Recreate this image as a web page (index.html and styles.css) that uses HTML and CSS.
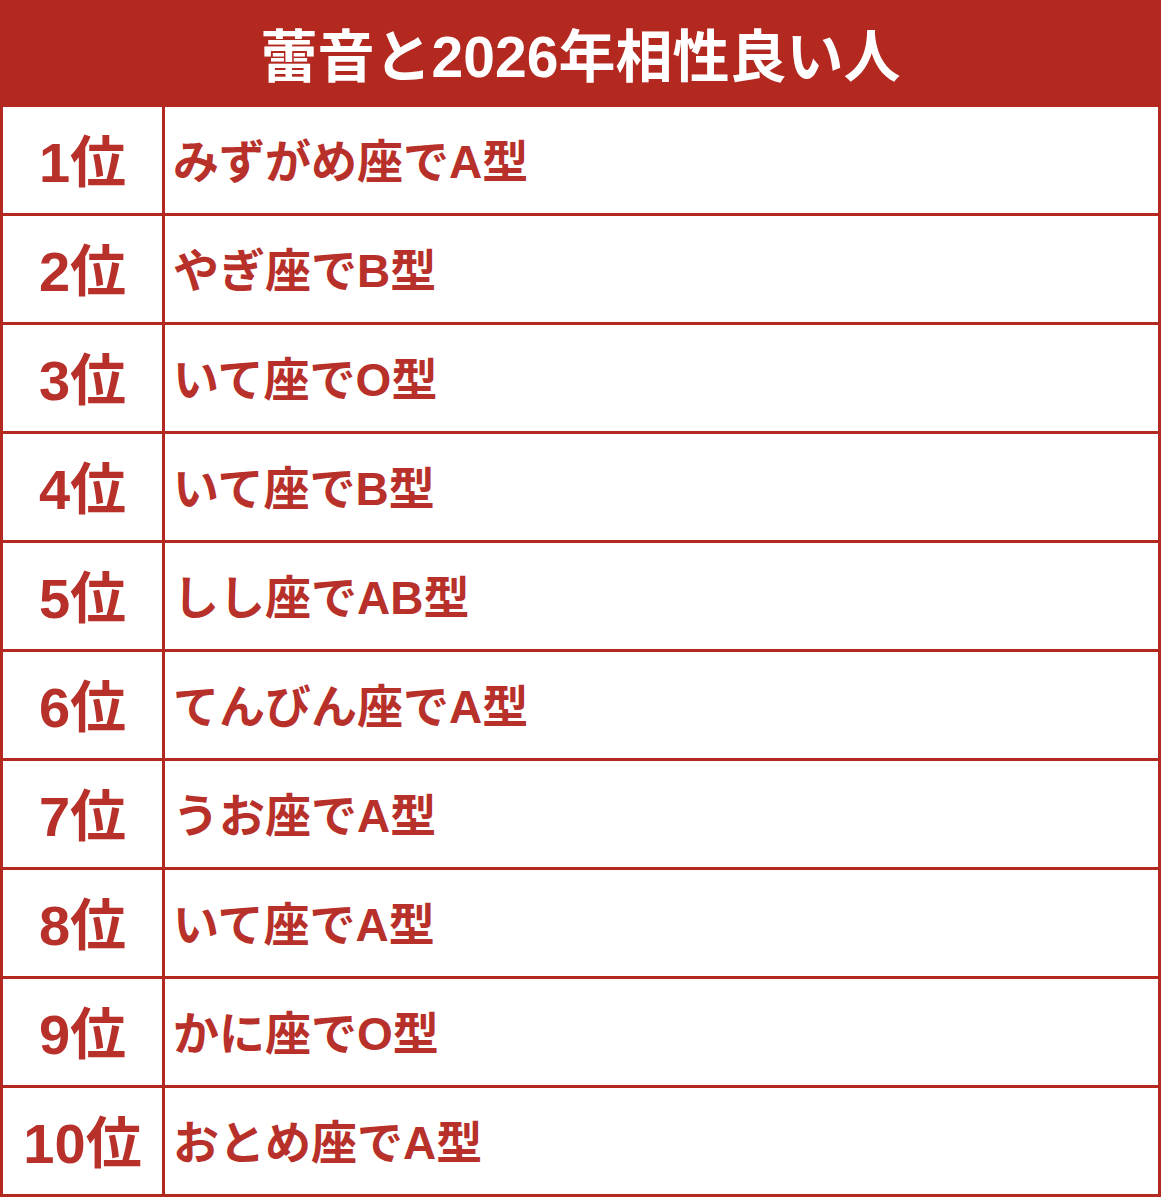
FILE: index.html
```html
<!DOCTYPE html>
<html lang="ja">
<head>
<meta charset="utf-8">
<link rel="stylesheet" href="styles.css">
</head>
<body>
<div class="board">
  <div class="title">蕾音と2026年相性良い人</div>
  <div class="rows">
    <div class="row"><div class="rank">1位</div><div class="item">みずがめ座でA型</div></div>
    <div class="row"><div class="rank">2位</div><div class="item">やぎ座でB型</div></div>
    <div class="row"><div class="rank">3位</div><div class="item">いて座でO型</div></div>
    <div class="row"><div class="rank">4位</div><div class="item">いて座でB型</div></div>
    <div class="row"><div class="rank">5位</div><div class="item">しし座でAB型</div></div>
    <div class="row"><div class="rank">6位</div><div class="item">てんびん座でA型</div></div>
    <div class="row"><div class="rank">7位</div><div class="item">うお座でA型</div></div>
    <div class="row"><div class="rank">8位</div><div class="item">いて座でA型</div></div>
    <div class="row"><div class="rank">9位</div><div class="item">かに座でO型</div></div>
    <div class="row"><div class="rank">10位</div><div class="item">おとめ座でA型</div></div>
  </div>
</div>
</body>
</html>
```
FILE: styles.css
```css
html, body {
  margin: 0;
  padding: 0;
  background: #ffffff;
}
.board {
  width: 1161px;
  font-family: "Liberation Sans", "Noto Sans CJK JP", sans-serif;
  font-weight: bold;
}
.title {
  height: 107px;
  padding-bottom: 4px;
  box-sizing: border-box;
  background: #b3281f;
  color: #ffffff;
  font-size: 57px;
  display: flex;
  align-items: center;
  justify-content: center;
}
.rows {
  border-left: 3px solid #b3281f;
  border-right: 3px solid #b3281f;
}
.row {
  display: flex;
  height: 106px;
  border-bottom: 3px solid #b3281f;
  color: #b8302a;
}
.rank {
  width: 162px;
  flex: none;
  border-right: 3px solid #b3281f;
  display: flex;
  align-items: center;
  justify-content: center;
  font-size: 56px;
  padding-bottom: 6px;
  box-sizing: border-box;
}
.item {
  flex: 1;
  display: flex;
  align-items: center;
  padding-left: 8px;
  padding-bottom: 4px;
  font-size: 46px;
}
```
